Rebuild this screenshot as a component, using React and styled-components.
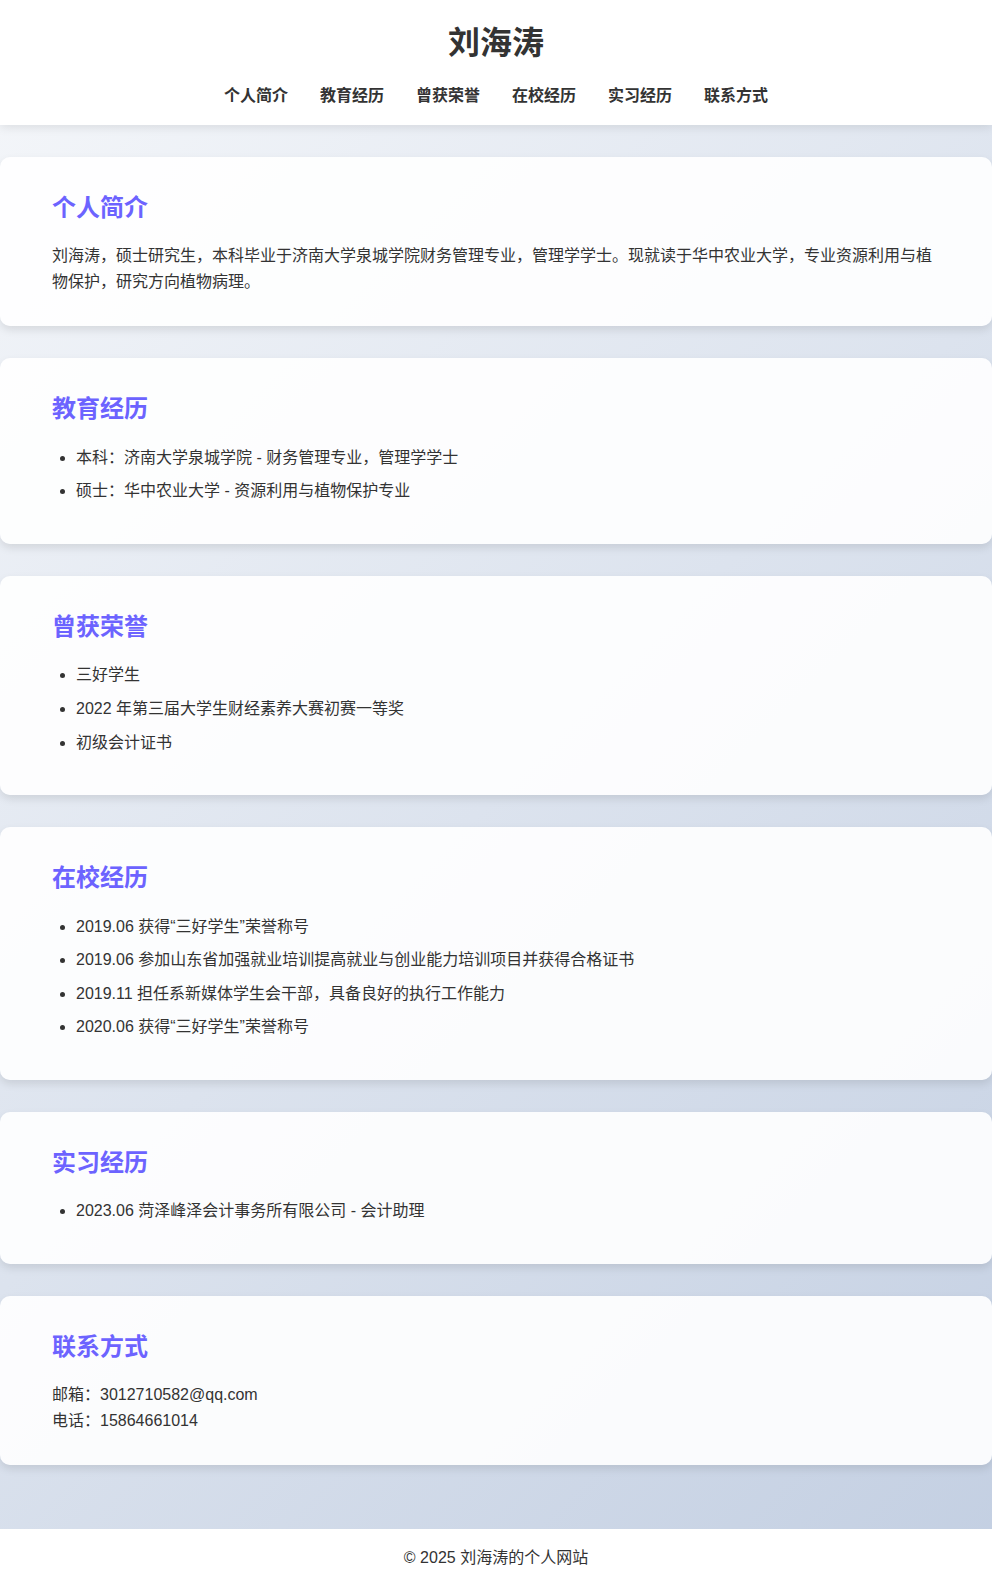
import React from "react";
import styled, { createGlobalStyle } from "styled-components";

const GlobalStyle = createGlobalStyle`
  * { box-sizing: border-box; }
  html, body { margin: 0; padding: 0; }
  body {
    font-family: "Liberation Sans", "Noto Sans CJK SC", sans-serif;
    line-height: 1.6;
    color: #333;
    background: linear-gradient(135deg, #f5f7fa 0%, #c3cfe2 100%);
    min-height: 100vh;
  }
`;

const Header = styled.header`
  background: #fff;
  padding: 18px 0 16px;
  text-align: center;
  box-shadow: 0 2px 10px rgba(0, 0, 0, 0.1);
  position: relative;
  z-index: 1;
`;

const Title = styled.h1`
  margin: 0;
  font-size: 32px;
  font-weight: 700;
  line-height: 1.6;
  color: #333;
`;

const Nav = styled.nav`
  margin-top: 14px;
  display: flex;
  justify-content: center;
  gap: 32px;
`;

const NavLink = styled.a`
  font-size: 16px;
  font-weight: 700;
  color: #333;
  text-decoration: none;
  line-height: 1.6;
`;

const Main = styled.main`
  max-width: 1000px;
  margin: 0 auto;
  padding: 32px 0;
`;

const Card = styled.section`
  background: rgba(255, 255, 255, 0.9);
  border-radius: 10px;
  box-shadow: 0 4px 8px rgba(0, 0, 0, 0.1);
  padding: 32px 52px;
  margin-bottom: 32px;
`;

const Heading = styled.h2`
  margin: 0 0 16px;
  font-size: 24px;
  font-weight: 700;
  line-height: 1.6;
  color: #6c63ff;
`;

const Text = styled.p`
  margin: 0;
  font-size: 16px;
  line-height: 1.6;
`;

const List = styled.ul`
  margin: 0;
  padding-left: 24px;
`;

const Item = styled.li`
  font-size: 16px;
  line-height: 1.6;
  margin-bottom: 8px;
`;

const Footer = styled.footer`
  background: #fff;
  text-align: center;
  padding: 16px 0;
  font-size: 16px;
  line-height: 1.6;
  color: #333;
`;

const navItems = ["个人简介", "教育经历", "曾获荣誉", "在校经历", "实习经历", "联系方式"];

const sections = [
  {
    title: "教育经历",
    items: [
      "本科：济南大学泉城学院 - 财务管理专业，管理学学士",
      "硕士：华中农业大学 - 资源利用与植物保护专业",
    ],
  },
  {
    title: "曾获荣誉",
    items: ["三好学生", "2022 年第三届大学生财经素养大赛初赛一等奖", "初级会计证书"],
  },
  {
    title: "在校经历",
    items: [
      "2019.06 获得“三好学生”荣誉称号",
      "2019.06 参加山东省加强就业培训提高就业与创业能力培训项目并获得合格证书",
      "2019.11 担任系新媒体学生会干部，具备良好的执行工作能力",
      "2020.06 获得“三好学生”荣誉称号",
    ],
  },
  {
    title: "实习经历",
    items: ["2023.06 菏泽峰泽会计事务所有限公司 - 会计助理"],
  },
];

export default function App() {
  return (
    <>
      <GlobalStyle />
      <Header>
        <Title>刘海涛</Title>
        <Nav>
          {navItems.map((n) => (
            <NavLink key={n} href={`#${n}`}>
              {n}
            </NavLink>
          ))}
        </Nav>
      </Header>
      <Main>
        <Card id="个人简介">
          <Heading>个人简介</Heading>
          <Text>
            刘海涛，硕士研究生，本科毕业于济南大学泉城学院财务管理专业，管理学学士。现就读于华中农业大学，专业资源利用与植物保护，研究方向植物病理。
          </Text>
        </Card>
        {sections.map((s) => (
          <Card key={s.title} id={s.title}>
            <Heading>{s.title}</Heading>
            <List>
              {s.items.map((it) => (
                <Item key={it}>{it}</Item>
              ))}
            </List>
          </Card>
        ))}
        <Card id="联系方式">
          <Heading>联系方式</Heading>
          <Text>邮箱：3012710582@qq.com</Text>
          <Text>电话：15864661014</Text>
        </Card>
      </Main>
      <Footer>© 2025 刘海涛的个人网站</Footer>
    </>
  );
}
